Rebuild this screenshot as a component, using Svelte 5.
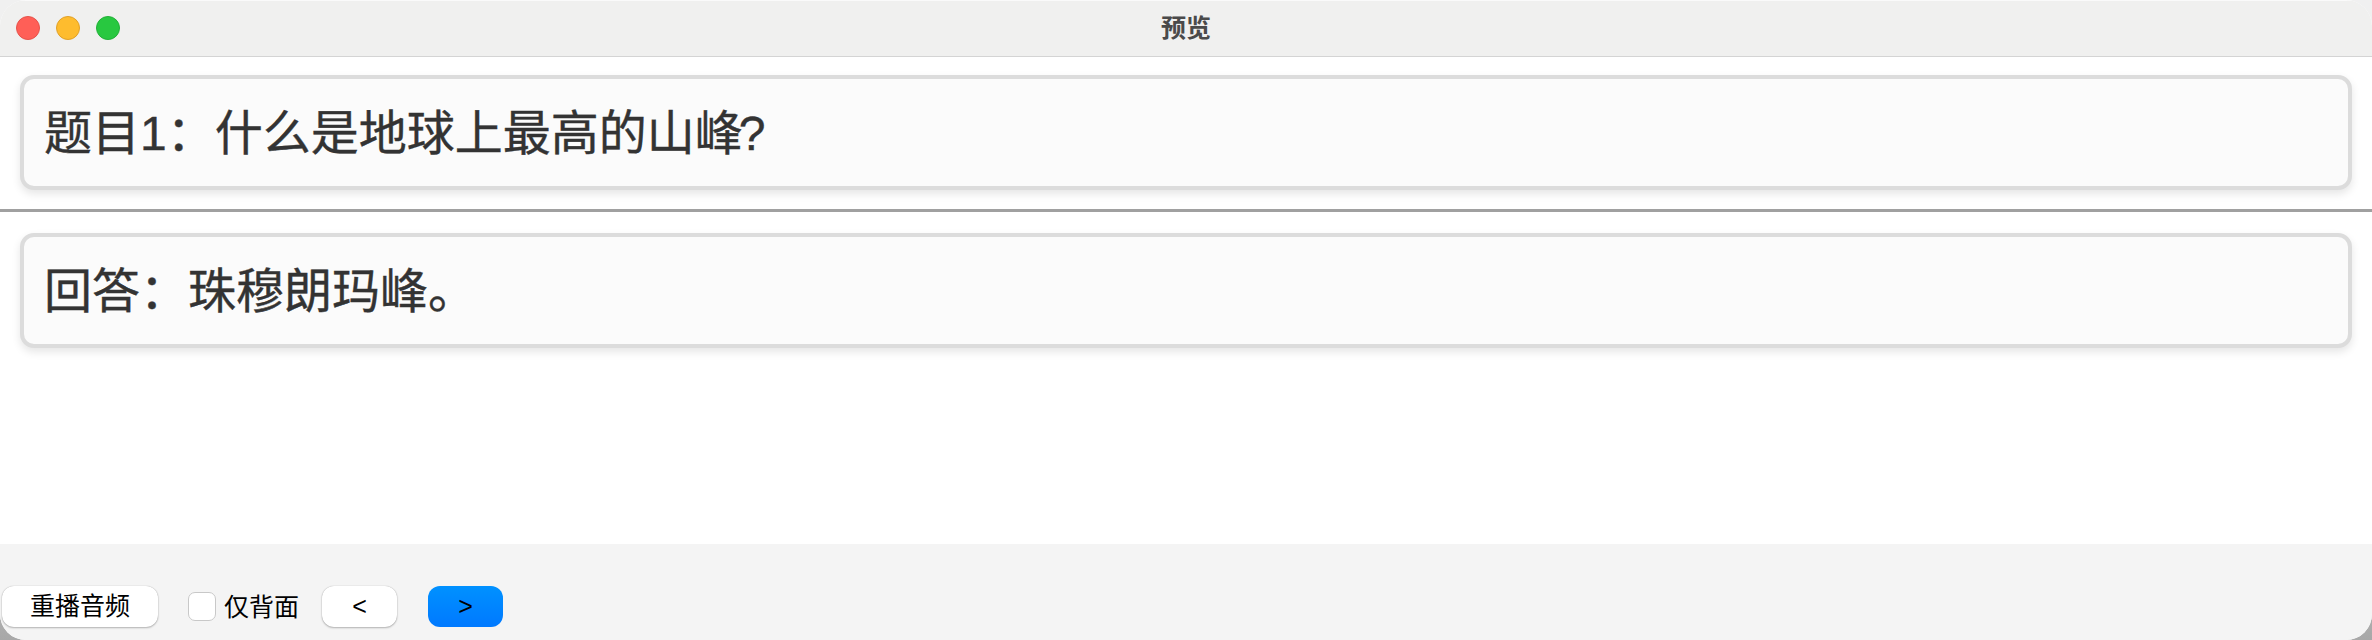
<script>
  let backOnly = $state(false);
</script>

<div class="desk">
  <div class="window">
    <header class="titlebar">
      <div class="lights">
        <span class="light red"></span>
        <span class="light yellow"></span>
        <span class="light green"></span>
      </div>
      <div class="title">预览</div>
    </header>
    <main class="content">
      <div class="card">题目1&#xFF1A;什么是地球上最高的山峰<span class="q">?</span></div>
      <hr class="divider" />
      <div class="card">回答&#xFF1A;珠穆朗玛峰。</div>
    </main>
    <footer class="footer">
      <button class="btn replay">重播音频</button>
      <label class="check">
        <input type="checkbox" bind:checked={backOnly} />
        <span>仅背面</span>
      </label>
      <button class="btn nav prev">&lt;</button>
      <button class="btn nav next">&gt;</button>
    </footer>
  </div>
</div>

<style>
  :global(body) {
    margin: 0;
    background: #fff;
  }
  .desk {
    width: 2372px;
    height: 640px;
    background: linear-gradient(#f0f0f0 0, #f0f0f0 50%, #a8a8a8 100%);
  }
  .window {
    width: 2372px;
    height: 640px;
    border-radius: 26px;
    overflow: hidden;
    background: #fff;
    display: flex;
    flex-direction: column;
    font-family: "Liberation Sans", "Noto Sans CJK SC", sans-serif;
  }
  .titlebar {
    height: 56px;
    flex: none;
    background: #f0f0ef;
    border-bottom: 1px solid #d4d4d4;
    position: relative;
    display: flex;
    align-items: center;
    justify-content: center;
    box-shadow: inset 0 1px 0 #fafafa;
  }
  .lights {
    position: absolute;
    left: 16px;
    top: 16px;
    display: flex;
    gap: 16px;
  }
  .light {
    width: 24px;
    height: 24px;
    border-radius: 50%;
    box-sizing: border-box;
  }
  .red { background: #ff5f57; border: 1px solid #e5534b; }
  .yellow { background: #febc2e; border: 1px solid #e0a028; }
  .green { background: #28c840; border: 1px solid #22b038; }
  .title {
    font-size: 25px;
    font-weight: 700;
    color: #4a4a4a;
    margin-top: -4px;
  }
  .content {
    flex: 1;
    padding: 18px 20px 0;
    background: #fff;
    display: flex;
    flex-direction: column;
  }
  .card {
    height: 115px;
    box-sizing: border-box;
    flex: none;
    border: 4px solid #dcdcdc;
    border-radius: 14px;
    background: #fbfbfb;
    box-shadow: 0 4px 8px rgba(0, 0, 0, 0.1);
    color: #333;
    font-size: 48px;
    font-weight: 400;
    line-height: 110px;
    padding-left: 20px;
    -webkit-text-stroke: 0.4px #333;
  }
  .q {
    margin-left: -4px;
  }
  .divider {
    border: 0;
    height: 3px;
    background: #a0a0a0;
    margin: 19px -20px 21px;
    flex: none;
  }
  .footer {
    height: 96px;
    flex: none;
    background: #f4f4f4;
    box-sizing: border-box;
    padding: 42px 0 0 2px;
    display: flex;
    align-items: flex-start;
  }
  .btn {
    height: 41px;
    box-sizing: border-box;
    border: 0;
    border-radius: 12px;
    background: #fff;
    box-shadow: 0 0 1px rgba(0, 0, 0, 0.3), 0 1px 2px rgba(0, 0, 0, 0.25);
    color: #000;
    font-family: inherit;
    font-size: 25px;
    padding: 0;
    line-height: 41px;
  }
  .replay { width: 156px; }
  .nav { width: 75px; }
  .prev { margin-left: 23px; }
  .next {
    margin-left: 31px;
    background: linear-gradient(#0091ff, #0079ff);
    box-shadow: none;
  }
  .check {
    display: flex;
    align-items: center;
    height: 41px;
    margin-left: 30px;
    font-size: 25px;
    color: #000;
  }
  .check span {
    margin-top: -3px;
  }
  .check input {
    appearance: none;
    width: 28px;
    height: 29px;
    margin: 0 8px 0 0;
    background: #fff;
    border: 1px solid #c8c8c8;
    border-radius: 7px;
    box-sizing: border-box;
  }
</style>
